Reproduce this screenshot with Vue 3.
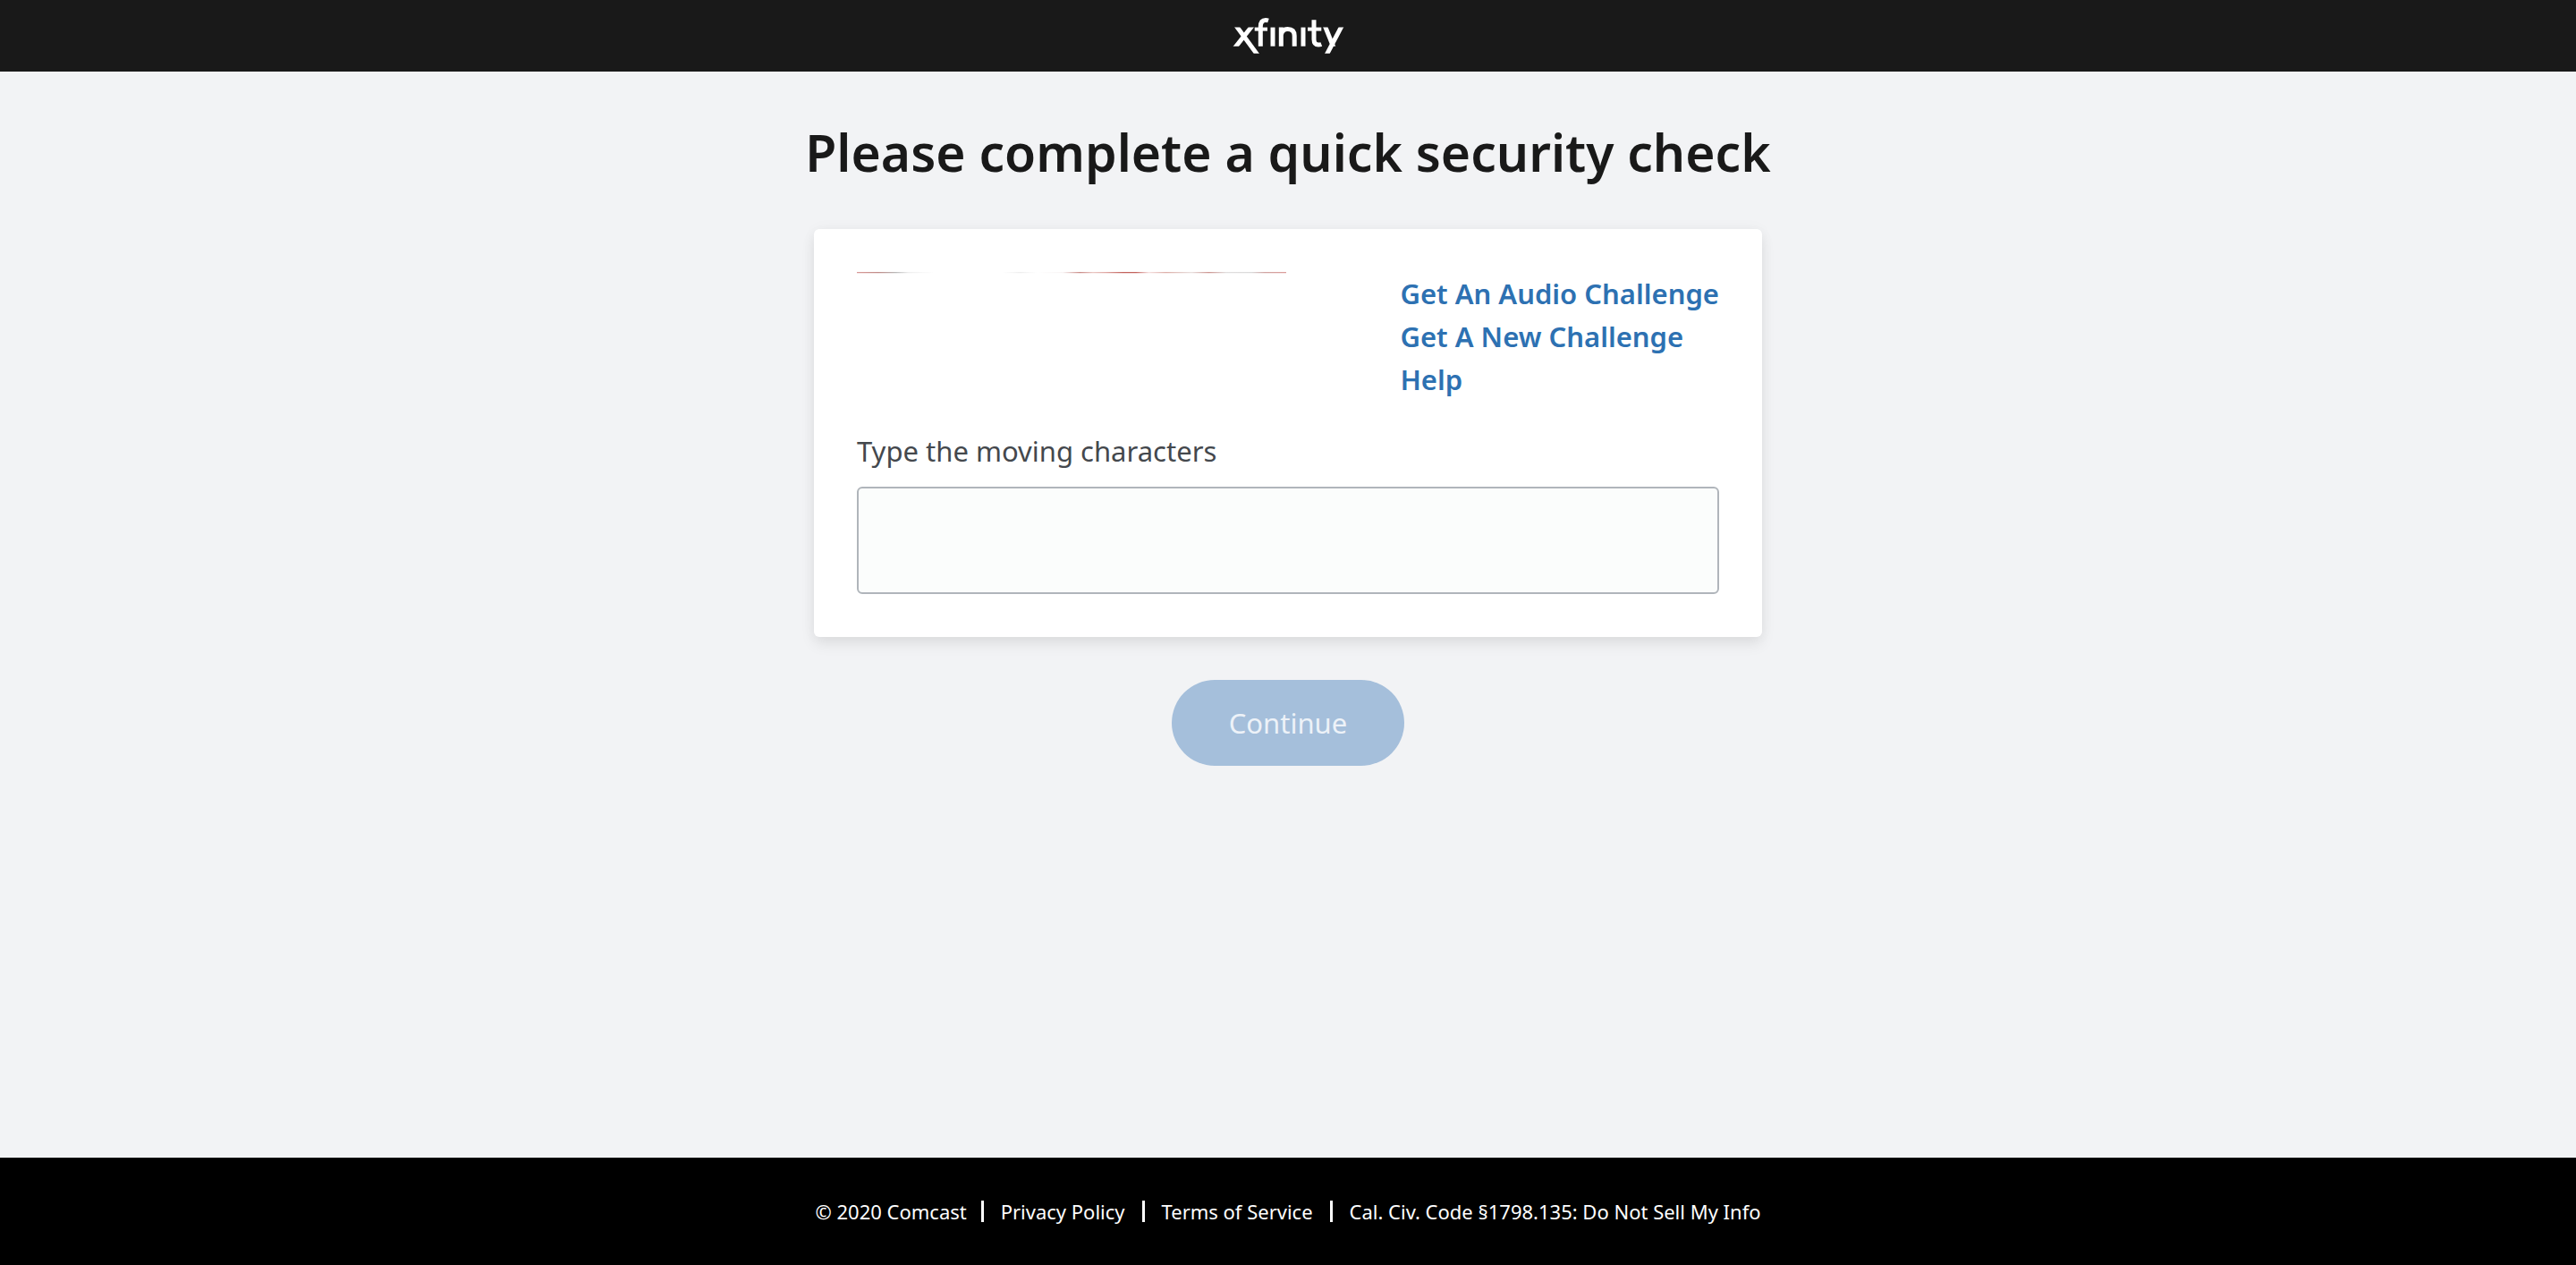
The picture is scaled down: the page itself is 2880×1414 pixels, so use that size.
<script setup>
import { ref } from 'vue'

const answer = ref('')
const challengeLinks = ['Get An Audio Challenge', 'Get A New Challenge', 'Help']
const legalLinks = [
  'Privacy Policy',
  'Terms of Service',
  'Cal. Civ. Code §1798.135: Do Not Sell My Info',
]
</script>

<template>
  <div class="page">
    <header class="topbar">
      <svg class="logo" viewBox="0 0 122 42" role="img" aria-label="xfinity">
        <defs>
          <clipPath id="diagonals">
            <path d="M-2 11.500 H126 V40.700 H-2 Z" />
          </clipPath>
          <clipPath id="arms">
            <path d="M-2 11.500 H126 V32.700 H-2 Z" />
          </clipPath>
        </defs>
        <g fill="none" stroke="#fff" stroke-width="5">
          <g clip-path="url(#diagonals)">
            <path d="M2.100 8.500 L27.900 43.700" />
            <path d="M121.900 8.500 L103.400 43.700" />
          </g>
          <g clip-path="url(#arms)">
            <path d="M22.100 8.500 L0.500 35.800" />
            <path d="M101.700 8.500 L112 34" />
          </g>
          <path d="M30.300 32.700 V11 Q30.300 3.500 36 3.500 Q37.500 3.500 39 4" />
          <path d="M23.700 13.600 H38" stroke-width="4" />
          <path d="M44 11.600 V32.700" />
          <path d="M53.300 32.700 V11.600 M53.300 20 Q54.500 13.400 60.500 13.400 Q68.200 13.400 68.200 21 V32.700" />
          <path d="M78 11.600 V32.700" />
          <path d="M90 3.300 V25 Q90 31 95 31 Q97 31 98.300 30.500" />
          <path d="M83 13.600 H98.300" stroke-width="4" />
        </g>
      </svg>
    </header>

    <main class="content">
      <h1 class="title">Please complete a quick security check</h1>
      <form class="form" @submit.prevent>
        <section class="card">
          <div class="challenge">
            <div class="captcha" role="img" aria-label="Moving characters"></div>
            <nav class="challenge-links">
              <a v-for="text in challengeLinks" :key="text" href="#">{{ text }}</a>
            </nav>
          </div>
          <label class="label" for="answer">Type the moving characters</label>
          <input id="answer" v-model="answer" class="answer" type="text" autocomplete="off" />
        </section>
        <button class="submit" type="submit" disabled>Continue</button>
      </form>
    </main>

    <footer class="footer">
      <span class="copyright">© 2020 Comcast</span>
      <a v-for="text in legalLinks" :key="text" class="legal" href="#">{{ text }}</a>
    </footer>
  </div>
</template>

<style>
body {
  margin: 0;
  background: #f2f3f5;
}
</style>

<style scoped>
.page {
  display: flex;
  flex-direction: column;
  min-height: 100vh;
  font-family: "Noto Sans", sans-serif;
  color: #191919;
}
.topbar {
  display: flex;
  justify-content: center;
  align-items: center;
  height: 80px;
  background: #191919;
}
.logo {
  width: 122px;
  height: 42px;
  overflow: visible;
}
.content {
  flex: 1;
  display: flex;
  flex-direction: column;
  align-items: center;
}
.title {
  margin: 54px 0 50px;
  font-size: 57px;
  line-height: 72px;
  font-weight: 600;
  text-align: center;
}
.form {
  display: flex;
  flex-direction: column;
  align-items: center;
  gap: 48px;
  width: 100%;
}
.card {
  box-sizing: border-box;
  width: 100%;
  max-width: 1060px;
  padding: 48px;
  border-radius: 6px;
  background: #fff;
  box-shadow: 0 8px 16px rgba(0, 0, 0, 0.08), 0 0 16px rgba(0, 0, 0, 0.04);
}
.challenge {
  display: flex;
  justify-content: space-between;
  margin-bottom: 32px;
}
.captcha {
  width: 480px;
  height: 2px;
  box-shadow: inset 0 -1px rgba(255, 255, 255, 0.75);
  background: linear-gradient(
    90deg,
    #d99a98 0%, #c08c88 5%, #b8b8b8 9%, #eee 12%, #fff 18%,
    #fff 34%, #eee 38%, #fff 42%, #f8f4f4 48%, #c98a86 52%,
    #eac8c4 55%, #dfa8a4 58%, #c2625c 62%, #c2625c 65%, #f6e0e0 68%,
    #dcaea8 72%, #e8e0de 78%, #cc9490 82%, #e0dede 86%, #dadada 92%,
    #d0a4a2 95%, #dc9c9a 100%
  );
}
.challenge-links {
  display: flex;
  flex-direction: column;
}
.challenge-links a {
  color: #2d71b2;
  font-size: 31px;
  line-height: 48px;
  font-weight: 600;
  text-decoration: none;
}
.label {
  display: block;
  margin-bottom: 16px;
  color: #44484d;
  font-size: 31px;
  line-height: 48px;
}
.answer {
  box-sizing: border-box;
  display: block;
  width: 100%;
  height: 120px;
  padding: 0 24px;
  border: 2px solid #b0b5bb;
  border-radius: 6px;
  background: #fbfdfc;
  color: #191919;
  font: inherit;
  font-size: 31px;
}
.submit {
  height: 96px;
  padding: 0 64px;
  border: 0;
  border-radius: 48px;
  background: #a5bfdb;
  color: #edf2f8;
  font-family: inherit;
  font-size: 31px;
  font-weight: 400;
}
.footer {
  display: flex;
  justify-content: center;
  align-items: center;
  height: 120px;
  background: #000;
  color: #fff;
  font-size: 22px;
  line-height: 24px;
  font-weight: 400;
}
.copyright {
  margin-right: 16px;
}
.legal {
  padding: 0 19px;
  border-left: 3px solid #fff;
  color: inherit;
  text-decoration: none;
}
.legal:last-child {
  padding-right: 0;
}
</style>
